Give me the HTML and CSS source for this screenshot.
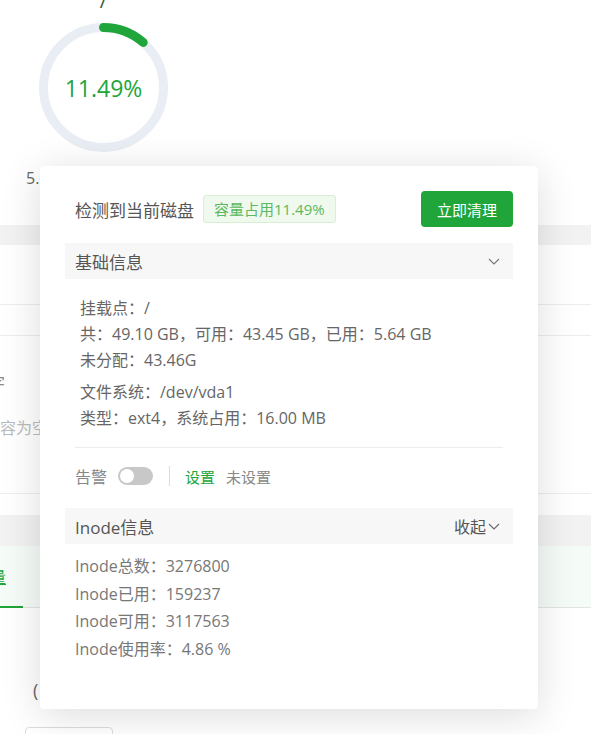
FILE: index.html
```html
<!DOCTYPE html>
<html lang="zh-CN">
<head>
<meta charset="utf-8">
<title>磁盘</title>
<link rel="stylesheet" href="styles.css">
</head>
<body>
<div class="page">
  <section class="top">
    <div class="disk">
      <div class="disk-name">/</div>
      <div class="ring">
        <svg width="129" height="129" viewBox="0 0 129 129">
          <circle cx="64.5" cy="64.5" r="60" fill="none" stroke="#e9edf4" stroke-width="9"/>
          <circle cx="64.5" cy="64.5" r="60" fill="none" stroke="#20a53a" stroke-width="9" stroke-linecap="round" stroke-dasharray="43.3 400" transform="rotate(-90 64.5 64.5)"/>
        </svg>
        <span class="ring-text">11.49%</span>
      </div>
      <div class="disk-size">5.64 GB / 49.10 GB</div>
    </div>
  </section>
  <div class="band"></div>
  <div class="row row-a"></div>
  <div class="row row-b"></div>
  <div class="area">
    <div class="area-label">文字</div>
    <div class="area-empty">内容为空</div>
  </div>
  <div class="gap"></div>
  <div class="band band-2"></div>
  <div class="tabs"><span class="tab-active">容量</span></div>
  <div class="bottom">
    <div class="paren">(</div>
    <div class="box"></div>
  </div>
</div>

<div class="popup">
  <div class="pop-head">
    <div class="pop-title">检测到当前磁盘</div>
    <span class="tag">容量占用11.49%</span>
    <button class="btn">立即清理</button>
  </div>

  <div class="sec-head">
    <span>基础信息</span>
    <svg class="chev" width="12" height="7" viewBox="0 0 12 7"><path d="M1 1 L6 6 L11 1" fill="none" stroke="#777" stroke-width="1.1"/></svg>
  </div>
  <div class="basic">
    <div class="group">
      <div>挂载点：/</div>
      <div>共：49.10 GB，可用：43.45 GB，已用：5.64 GB</div>
      <div>未分配：43.46G</div>
    </div>
    <div class="group group-2">
      <div>文件系统：/dev/vda1</div>
      <div>类型：ext4，系统占用：16.00 MB</div>
    </div>
  </div>
  <div class="divider"></div>
  <div class="alarm">
    <span class="alarm-label">告警</span>
    <span class="switch"><span class="knob"></span></span>
    <span class="sep"></span>
    <span class="set">设置</span>
    <span class="unset">未设置</span>
  </div>

  <div class="sec-head inode-head">
    <span>Inode信息</span>
    <span class="fold">收起<svg class="chev-s" width="12" height="7" viewBox="0 0 12 7"><path d="M1 1 L6 6 L11 1" fill="none" stroke="#666" stroke-width="1.1"/></svg></span>
  </div>
  <div class="inode">
    <div>Inode总数：3276800</div>
    <div>Inode已用：159237</div>
    <div>Inode可用：3117563</div>
    <div>Inode使用率：4.86 %</div>
  </div>
</div>
</body>
</html>
```

FILE: styles.css
```css
* { box-sizing: border-box; }
html, body { margin: 0; padding: 0; }
body {
  width: 591px;
  height: 734px;
  overflow: hidden;
  background: #fff;
  font-family: "Open Sans", "Noto Sans CJK SC", sans-serif;
  color: #666;
  position: relative;
}
.page { width: 591px; }

.top { height: 225px; padding-top: 1px; }
.disk {
  width: 155px;
  margin-left: 26px;
  display: flex;
  flex-direction: column;
  align-items: center;
}
.disk-name {
  height: 20px;
  line-height: 20px;
  margin-top: -10px;
  font-size: 20px;
  color: #3d5a45;
}
.ring {
  position: relative;
  width: 129px;
  height: 129px;
  margin-top: 12px;
}
.ring svg { display: block; }
.ring-text {
  position: absolute;
  left: 0; right: 0; top: 0; bottom: 0;
  display: flex;
  align-items: center;
  justify-content: center;
  font-size: 23px;
  color: #20a53a;
  padding-top: 1px;
}
.disk-size {
  align-self: flex-start;
  margin-top: 16px;
  line-height: 20px;
  font-size: 16px;
  color: #666;
  white-space: nowrap;
}

.band { height: 20px; background: #f2f2f2; }
.row { border-bottom: 1px solid #ececec; }
.row-a { height: 60px; }
.row-b { height: 31px; }
.area {
  height: 158px;
  padding-top: 36px;
  border-bottom: 1px solid #ececec;
}
.area-label {
  margin-left: -27px;
  line-height: 22px;
  font-size: 16px;
  color: #888;
  white-space: nowrap;
}
.area-empty {
  margin-left: -16px;
  margin-top: 23px;
  line-height: 22px;
  font-size: 16px;
  color: #bbb;
  white-space: nowrap;
}
.gap { height: 21px; }
.band-2 { height: 31px; }
.tabs {
  height: 62px;
  background: #f5fbf7;
  border-bottom: 1px solid #e4e4e4;
  position: relative;
  display: flex;
  align-items: center;
}
.tab-active {
  margin-left: -26px;
  font-size: 16px;
  color: #20a53a;
  text-decoration: underline;
  line-height: 24px;
  white-space: nowrap;
}
.tabs::after {
  content: "";
  position: absolute;
  left: 0; bottom: -1px;
  width: 23px; height: 2px;
  background: #20a53a;
}
.bottom { padding-left: 25px; padding-top: 71px; }
.paren {
  margin-left: 8px;
  line-height: 22px;
  font-size: 18px;
  color: #666;
}
.box {
  margin-top: 26px;
  width: 88px;
  height: 30px;
  border: 1px solid #dcdcdc;
  border-radius: 4px;
}

/* popup overlay */
.popup {
  position: absolute;
  left: 40px;
  top: 166px;
  width: 498px;
  height: 543px;
  background: #fff;
  border-radius: 4px;
  box-shadow: 0 6px 40px rgba(0, 0, 0, 0.14);
  padding: 25px 25px 0 25px;
}
.pop-head {
  display: flex;
  align-items: center;
  height: 36px;
}
.pop-title {
  padding-left: 10px;
  font-size: 17px;
  color: #555;
}
.tag {
  margin-left: 9px;
  height: 28px;
  line-height: 26px;
  padding: 0 10px;
  border: 1px solid #d8efd4;
  background: #eff9ed;
  border-radius: 3px;
  font-size: 15px;
  color: #5cb860;
}
.btn {
  margin-left: auto;
  width: 92px;
  height: 36px;
  border: 0;
  border-radius: 4px;
  background: #20a53a;
  color: #fff;
  font-family: inherit;
  font-size: 15px;
  padding: 0;
}
.sec-head {
  margin-top: 16px;
  height: 36px;
  background: #f7f7f7;
  display: flex;
  align-items: center;
  justify-content: space-between;
  padding: 0 13px 0 10px;
  font-size: 17px;
  color: #555;
}
.basic {
  padding: 16px 0 0 15px;
  font-size: 16px;
  line-height: 26px;
  color: #666;
}
.group-2 { margin-top: 6px; }
.divider {
  margin: 16px 10px 0 10px;
  height: 1px;
  background: #ececec;
}
.alarm {
  margin-top: 18px;
  padding-left: 10px;
  height: 20px;
  display: flex;
  align-items: center;
  font-size: 16px;
  color: #888;
}
.switch {
  margin-left: 11px;
  width: 35px;
  height: 18px;
  border-radius: 9px;
  background: #c8c8c8;
  position: relative;
}
.knob {
  position: absolute;
  left: 2px; top: 2px;
  width: 14px; height: 14px;
  border-radius: 50%;
  background: #fff;
}
.sep {
  margin-left: 16px;
  width: 1px;
  height: 20px;
  background: #ddd;
}
.set {
  margin-left: 15px;
  font-size: 15px;
  color: #20a53a;
}
.unset {
  margin-left: 11px;
  font-size: 15px;
  color: #888;
}
.inode-head { margin-top: 22px; }
.fold {
  display: flex;
  align-items: center;
  font-size: 16px;
  color: #555;
}
.chev-s { margin-left: 2px; }
.inode {
  padding: 9px 0 0 10px;
  font-size: 16px;
  line-height: 27.7px;
  color: #777;
}
```
